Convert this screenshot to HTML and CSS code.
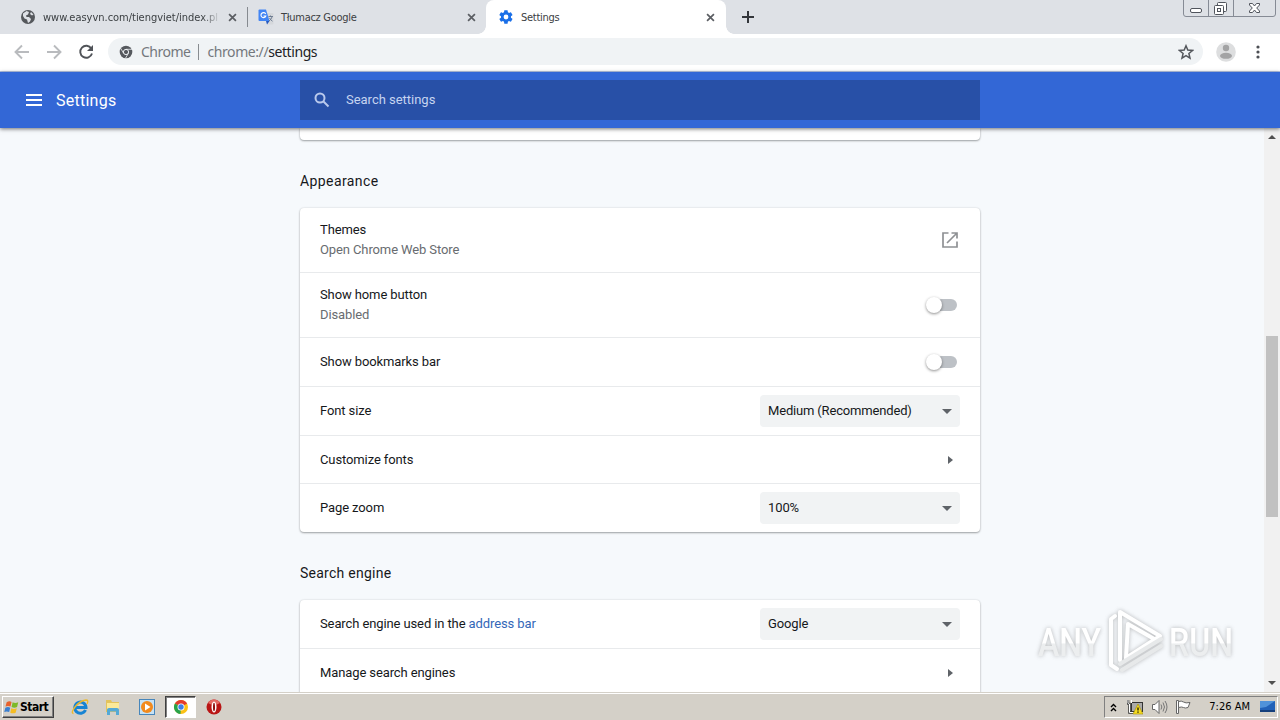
FILE: index.html
```html
<!DOCTYPE html>
<html lang="en">
<head>
<meta charset="utf-8">
<title>Settings</title>
<link rel="stylesheet" href="styles.css">
</head>
<body>
<div class="screen">
  <div class="tabs">
    <div class="tab tab-first">
      <svg class="fav" viewBox="0 0 16 16"><circle cx="8" cy="8" r="7" fill="#55585c"/><path d="M3 4.500 6.500 2 9 3l-1 2.500-2 1 .5 1.500H9l2 2-1 2.500L8 14l-1-3.500-2.500-1L3 7zM11 3l2.500 2.500-1.500 1L10 5z" fill="#dee1e6"/></svg>
      <span class="tab-title fade">www.easyvn.com/tiengviet/index.pl</span>
      <svg class="x" viewBox="0 0 10 10"><path d="M1.200 1.200 8.800 8.800M8.800 1.200 1.200 8.800"/></svg>
    </div>
    <div class="tab tab-second">
      <svg class="fav" viewBox="0 0 16 16"><path d="M6 4h8.500q1 0 1 1v9.500q0 1-1 1H9z" fill="#d5d8dc"/><path d="M1.500.5H8l3.500 11.500h-10q-1 0-1-1v-9.500q0-1 1-1z" fill="#4285f4"/><path d="M8 12h3.500L9 15.500z" fill="#2358c0"/><path d="M7.700 5A2.500 2.500 0 1 0 7.800 7H5.500" fill="none" stroke="#fff" stroke-width="1.100"/><path d="M10.500 7.500H15M12.500 6.500v1M14 8q-.8 2.500-3 4M11.500 9q1 2 3 3.200" fill="none" stroke="#65758b" stroke-width=".9"/></svg>
      <span class="tab-title tight">Tłumacz Google</span>
      <svg class="x" viewBox="0 0 10 10"><path d="M1.200 1.200 8.800 8.800M8.800 1.200 1.200 8.800"/></svg>
    </div>
    <div class="tab tab-active">
      <svg class="fav" viewBox="0 0 24 24"><path fill="#1a6fe8" d="M19.400 13c0-.3.100-.6.100-1s0-.7-.1-1l2.100-1.700c.2-.1.200-.4.100-.6l-2-3.500c-.1-.2-.4-.3-.6-.2l-2.500 1a7 7 0 0 0-1.700-1l-.4-2.600c0-.2-.2-.4-.5-.4h-4c-.3 0-.5.200-.5.400L9 5a7 7 0 0 0-1.700 1l-2.500-1c-.2-.1-.5 0-.6.200l-2 3.500c-.1.200-.1.500.1.600L4.500 11a8 8 0 0 0 0 2l-2.200 1.700c-.2.100-.2.400-.1.600l2 3.500c.1.200.4.300.6.200l2.500-1a7 7 0 0 0 1.700 1l.4 2.600c0 .2.200.4.500.4h4c.3 0 .5-.2.500-.4l.4-2.600a7 7 0 0 0 1.700-1l2.500 1c.2.100.5 0 .6-.2l2-3.500c.1-.2.100-.5-.1-.6zM12 15.600a3.600 3.600 0 1 1 0-7.200 3.600 3.600 0 0 1 0 7.200z"/></svg>
      <span class="tab-title tight">Settings</span>
      <svg class="x" viewBox="0 0 10 10"><path d="M1.200 1.200 8.800 8.800M8.800 1.200 1.200 8.800"/></svg>
    </div>
    <svg class="plus" viewBox="0 0 12 12"><path d="M6 0v12M0 6h12" stroke="#33363b" stroke-width="2"/></svg>
    <svg class="winbtns" viewBox="0 0 94 18"><path d="M.5 0v14q0 2.500 2.500 2.500h87q2.500 0 2.500-2.500V0M25.500 0v16M50.500 0v16" fill="none" stroke="#868b95"/><g fill="#fff" stroke="#50545c"><rect x="7.500" y="8.500" width="11" height="4" rx="1.500"/><rect x="34.500" y="2.500" width="9" height="9" rx="1"/><rect x="31.500" y="5.500" width="9" height="9" rx="1"/><rect x="34.500" y="8.500" width="3" height="3"/><path d="M66.500 3.500h3l2 2.500 2-2.500h3v1.500L73.700 8l2.800 3v1.500h-3l-2-2.500-2 2.500h-3V11l2.800-3-2.800-3z"/></g></svg>
  </div>
  <div class="toolbar">
    <svg class="nav" viewBox="0 0 16 16"><path d="M15 8H2M8 1.500 1.500 8 8 14.500" stroke="#b9bbbe"/></svg>
    <svg class="nav" viewBox="0 0 16 16"><path d="M1 8h13M8 1.500 14.500 8 8 14.500" stroke="#b9bbbe"/></svg>
    <svg class="nav" viewBox="0 0 16 16"><path d="M13.300 4.500A6 6 0 1 0 14 9.500" stroke="#505358"/><path d="M15 1v6H9z" fill="#505358" stroke="none"/></svg>
    <div class="omnibox">
      <svg class="chromeico" viewBox="0 0 14 14"><circle cx="7" cy="7" r="6.300" fill="#56595e"/><circle cx="7" cy="7" r="2.600" fill="none" stroke="#eff2f5"/><path d="M7 4.300h6M4.600 8.300 1.700 3.300M9.400 8.300 6.500 13.200" stroke="#eff2f5" stroke-width=".8"/></svg>
      <span class="o-name">Chrome</span><span class="o-sep"></span><span class="o-url">chrome://<b>settings</b></span>
      <svg class="star" viewBox="0 0 16 16"><path d="m8 1.800 1.800 4.300 4.700.4-3.600 3 1.100 4.600L8 11.700l-4 2.400 1.100-4.600-3.600-3 4.700-.4z" fill="none" stroke="#54575c" stroke-width="1.500"/></svg>
    </div>
    <svg class="avatar" viewBox="0 0 20 20"><circle cx="10" cy="10" r="9.800" fill="#dddedf"/><circle cx="10" cy="6" r="3.200" fill="#a3a3a4"/><ellipse cx="10" cy="13.800" rx="6" ry="3" fill="#a3a3a4"/></svg>
    <svg class="dots" viewBox="0 0 4 14"><circle cx="2" cy="2" r="1.600"/><circle cx="2" cy="7" r="1.600"/><circle cx="2" cy="12" r="1.600"/></svg>
  </div>
  <header class="header">
    <svg class="burger" viewBox="0 0 16 12"><path d="M0 1h16M0 6h16M0 11h16" stroke="#fff" stroke-width="2"/></svg>
    <span class="h-title">Settings</span>
    <div class="search">
      <svg viewBox="0 0 16 16"><circle cx="6" cy="6" r="4.500"/><path d="m9.500 9.500 5 5"/></svg>
      <span>Search settings</span>
    </div>
  </header>
  <div class="view">
    <main class="content">
      <div class="card stub"></div>
      <h2 class="h-app">Appearance</h2>
      <div class="card">
        <div class="row tall"><div><p>Themes</p><p class="sub">Open Chrome Web Store</p></div>
          <svg class="ext" viewBox="0 0 16 16"><path d="M6.500 1H1v14h14V9.500M9.500 1H15v5.500M15 1 5 11"/></svg></div>
        <div class="row tall"><div><p>Show home button</p><p class="sub">Disabled</p></div><span class="toggle"><i></i></span></div>
        <div class="row"><p>Show bookmarks bar</p><span class="toggle"><i></i></span></div>
        <div class="row"><p>Font size</p><div class="select"><span class="w-med">Medium (Recommended)</span><i></i></div></div>
        <div class="row short"><p>Customize fonts</p><i class="chev"></i></div>
        <div class="row"><p>Page zoom</p><div class="select"><span>100%</span><i></i></div></div>
      </div>
      <h2 class="h-search">Search engine</h2>
      <div class="card">
        <div class="row"><p>Search engine used in the <a>address bar</a></p><div class="select"><span>Google</span><i></i></div></div>
        <div class="row"><p>Manage search engines</p><i class="chev"></i></div>
      </div>
    </main>
    <div class="scrollbar"><i class="up"></i><i class="thumb"></i><i class="down"></i></div>
    <svg class="watermark" viewBox="0 0 210 80">
      <defs><linearGradient id="wm" x1="0" y1="0" x2="0" y2="1"><stop offset=".5" stop-color="#fff"/><stop offset=".52" stop-color="#eceeef"/></linearGradient></defs>
      <g fill="url(#wm)"><text x="8" y="54" textLength="63" lengthAdjust="spacingAndGlyphs">ANY</text><text x="139" y="54" textLength="64" lengthAdjust="spacingAndGlyphs">RUN</text></g>
      <g fill="none" stroke-width="4" stroke-linejoin="round" stroke-linecap="round"><path d="M85 14 81 17v46l6 4" stroke="#fff"/><path d="M90 58V10l40 24-34 22 2-34 28 16" stroke="#fff"/><path d="m90 62 41-25M92 68l39-24" stroke="#e7e9ea"/></g>
    </svg>
  </div>
  <footer class="taskbar">
    <div class="start"><svg viewBox="0 0 18 16"><path d="M3 2q3-2 5.500-.3L7.300 7Q4.500 5.500 1.700 7z" fill="#e8622c"/><path d="M9.700 2.200q3 1.500 6.300 0L14.700 7.500q-3 1.500-6.200 0z" fill="#7db928"/><path d="M1.500 8.200q3-1.500 5.500 0l-1.200 5q-2.800-1.600-5.500 0z" fill="#3a7fd0"/><path d="M8.200 8.800q3 1.500 6.200 0l-1.300 5q-3 1.500-6 0z" fill="#f5bd24"/></svg><span>Start</span></div>
    <svg class="app app-ie" viewBox="0 0 18 18"><path d="M14.500 12A5.600 5.600 0 1 1 15 9.500H5" fill="none" stroke="#1784d3" stroke-width="3"/><path d="M2.500 15.500Q-.5 15 4 9T15 2q3 0 1 4" fill="none" stroke="#edb92b" stroke-width="1.300"/></svg>
    <svg class="app app-folder" viewBox="0 0 18 18"><path d="M2 2h5l1 2h7v10H2z" fill="#e3c35c"/><path d="M3 5h12v6H3z" fill="#fbe999"/><path d="M3 17v-5q0-2 2-2h8q2 0 2 2v5h-3v-3.500H6V17z" fill="#54a9d6"/></svg>
    <svg class="app app-media" viewBox="0 0 18 18"><rect x="1.500" y="1.500" width="15" height="15" fill="#c6e2f5" stroke="#4786bb"/><circle cx="9" cy="9" r="6" fill="#f28a1d"/><path d="M7 5.500v7L12.500 9z" fill="#fff"/></svg>
    <div class="app-active"><svg class="app" viewBox="0 0 18 18"><circle cx="9" cy="9" r="7" fill="#fbc116"/><path d="M9 9 2.900 5.500A7 7 0 0 1 15.100 5.500z" fill="#e33b2e"/><path d="M9 9 2.900 5.500A7 7 0 0 0 8.500 16z" fill="#29a34a"/><circle cx="9" cy="9" r="3.500" fill="#fff"/><circle cx="9" cy="9" r="2.700" fill="#3e7fe8"/></svg></div>
    <svg class="app app-opera" viewBox="0 0 18 18"><circle cx="9" cy="9" r="7.500" fill="#b91515"/><path d="M3 5a7 7 0 0 1 12 0q-6 4-12 0z" fill="#e46a64"/><ellipse cx="9" cy="9" rx="2.500" ry="5.500" fill="#fff"/><ellipse cx="9" cy="9" rx="1" ry="4.300" fill="#8d0c0c"/></svg>
    <div class="tray">
      <svg class="tray-up" viewBox="0 0 7 9"><path d="m1 4 2.500-2.500L6 4M1 8l2.500-2.500L6 8" fill="none" stroke="#000" stroke-width="1.400"/></svg>
      <svg class="tray-net" viewBox="0 0 16 16"><rect x="4.500" y="3.500" width="11" height="9" fill="#aaa" stroke="#333"/><path d="M1 1v3q0 1 1.500 1v8.500H6" fill="none" stroke="#333" stroke-width="2.500"/><path d="M1 1v3q0 1 1.500 1v8.500H6M4.500 1v3" fill="none" stroke="#fff"/><path d="m11 5 5 10H6z" fill="#f6dc20" stroke="#a58b00" stroke-width=".6"/><path d="M11 8.500v3M11 12.500v1.300" stroke="#000" stroke-width="1.200"/></svg>
      <svg class="tray-vol" viewBox="0 0 17 16"><path d="M1.500 5.500H4l4-4v13l-4-4H1.500z" fill="#fff" stroke="#666"/><path d="M10 5.500q1.700 2.500 0 5M12 3.500q3 4.500 0 9M14 2q4 6 0 12" fill="none" stroke="#777"/></svg>
      <svg class="tray-flag" viewBox="0 0 16 16"><path d="M1.500 1.500h2v13h-2z" fill="#fff" stroke="#666"/><path d="M3.500 2.500q3-1 5 .5t6.500.5l-2 5q-3 1-4.500 0t-5 0z" fill="#fff" stroke="#666"/></svg>
      <span class="clock">7:26 AM</span>
      <svg class="tray-desk" viewBox="0 0 16 14"><path d="M0 1h15v9H0z" fill="#2161b8"/><path d="M0 1h15L6 7 0 8z" fill="#4f92da"/><path d="M0 10h15v2H0z" fill="#153f7b"/></svg>
    </div>
  </footer>
</div>
</body>
</html>
```
FILE: styles.css
```css
* { box-sizing: border-box; }
body { margin: 0; overflow: hidden; }
p, h2 { margin: 0; font-weight: 400; }
svg { display: block; flex: none; }
.screen { width: 1280px; height: 720px; display: flex; flex-direction: column; background: #f6f9fc; font: 13px/20px Roboto, sans-serif; color: #16181b; overflow: hidden; }
.screen span { white-space: nowrap; }

.tabs { height: 34px; flex: none; display: flex; align-items: center; background: #dee1e6; font: 11px/16px "DejaVu Sans Condensed", "DejaVu Sans", sans-serif; color: #3c4043; }
.tab { height: 34px; display: flex; align-items: center; }
.tab-first { width: 248px; padding: 0 11px 0 20px; }
.tab-second { width: 238px; padding: 0 10px; }
.tab-second::before { content: ""; width: 1px; height: 20px; background: #868a90; margin: 0 10px 0 -11px; }
.tab-active { width: 240px; padding: 0 11px 0 12px; background: #fff; border-radius: 8px 8px 0 0; position: relative; }
.tab-active::before, .tab-active::after { content: ""; position: absolute; bottom: 0; width: 8px; height: 8px; }
.tab-active::before { left: -8px; background: radial-gradient(circle at 0 0, transparent 7.500px, #fff 8px); }
.tab-active::after { right: -8px; background: radial-gradient(circle at 100% 0, transparent 7.500px, #fff 8px); }
.fav { width: 16px; height: 16px; margin-right: 7px; }
.tab-title { margin-right: auto; padding-top: 1px; }
.tight { letter-spacing: -.28px; }
.fade { letter-spacing: -.02px; -webkit-mask-image: linear-gradient(90deg, #000 91%, rgba(0,0,0,.15)); mask-image: linear-gradient(90deg, #000 91%, rgba(0,0,0,.15)); }
.x { width: 9px; height: 9px; }
.x path { stroke: #5b5e63; stroke-width: 1.900; }
.plus { width: 12px; height: 12px; margin-left: 16px; }
.winbtns { width: 94px; height: 18px; margin: 0 3px 0 auto; align-self: flex-start; }

.toolbar { height: 38px; flex: none; display: flex; align-items: center; padding: 0 20px 2px 14px; background: #fff; border-bottom: 1px solid #b9c8e8; }
.nav { width: 16px; height: 16px; margin-right: 16px; fill: none; stroke-width: 1.900; }
.omnibox { width: 1095px; height: 27px; margin-left: -2px; border-radius: 14px; background: #f0f3f5; display: flex; align-items: center; padding: 0 9px 0 11px; font: 14px/20px "Noto Sans", sans-serif; letter-spacing: -.42px; color: #74787d; }
.chromeico { width: 14px; height: 14px; margin-right: 8px; }
.o-name { letter-spacing: -.5px; }
.o-sep { width: 1px; height: 16px; background: #888c90; margin: 0 8px; }
.o-url b { font-weight: 400; color: #202124; }
.star { width: 16px; height: 16px; margin-left: auto; }
.avatar { width: 20px; height: 20px; margin-left: 13px; }
.dots { width: 4px; height: 14px; margin-left: auto; fill: #4c4f54; }

.header { height: 56px; flex: none; display: flex; align-items: center; background: #3367d6; box-shadow: 0 1px 4px rgba(0,0,0,.55); position: relative; z-index: 2; padding-left: 26px; }
.burger { width: 16px; height: 12px; }
.h-title { width: 244px; margin-left: 14px; padding-top: 2px; font-size: 16px; color: #fff; letter-spacing: .25px; }
.search { width: 680px; height: 40px; background: #2850a7; display: flex; align-items: center; padding-left: 14px; color: #c6d4f0; letter-spacing: -.02px; }
.search svg { width: 16px; height: 16px; margin-right: 16px; fill: none; stroke: #b9c9ec; stroke-width: 2; }

.view { height: 564px; flex: none; overflow: hidden; position: relative; display: flex; justify-content: center; }
.content { width: 680px; }
.card { background: #fff; border-radius: 4px; box-shadow: 0 1px 2px rgba(60,64,67,.45), 0 0 2px rgba(60,64,67,.15); }
.stub { height: 12px; border-radius: 0 0 4px 4px; }
h2 { font-size: 14px; line-height: 20px; }
.h-app { padding: 31px 0 17px; letter-spacing: .4px; }
.h-search { padding: 31px 0 17px; letter-spacing: .25px; }
.row { height: 49px; display: flex; align-items: center; justify-content: space-between; padding: 0 20px; border-bottom: 1px solid #e8eaec; letter-spacing: -.11px; }
.row.tall { height: 65px; }
.row.short { height: 48px; padding-top: 1px; }
.row:last-child { border-bottom: 0; height: 48px; }
.sub { color: #686c70; }
.row a { color: #3367b8; }
.w-med { letter-spacing: -.17px; }
.ext { width: 16px; height: 16px; margin-right: 2px; fill: none; stroke: #8f9194; stroke-width: 1.700; }
.toggle { width: 32px; height: 12px; margin-right: 3px; border-radius: 6px; background: linear-gradient(90deg, transparent 8px, #bdc1c6 8px); display: flex; align-items: center; }
.toggle i { width: 16px; height: 16px; flex: none; margin-left: 1px; border-radius: 50%; background: #fff; box-shadow: 0 1px 3px rgba(0,0,0,.45); }
.select { width: 200px; height: 32px; border-radius: 4px; background: #f1f3f4; padding: 0 8px; display: flex; align-items: center; justify-content: space-between; }
.select i { border: 5px solid transparent; border-top-color: #5f6368; border-bottom: 0; }
.chev { border: 4px solid transparent; border-left: 5px solid #5f6368; border-right: 0; margin-right: 7px; }

.scrollbar { position: absolute; right: 0; top: 0; width: 16px; height: 564px; background: #f1f1f1; display: flex; flex-direction: column; align-items: center; }
.up, .down { border: 4px solid transparent; }
.up { border-bottom-color: #505050; border-top: 0; margin-top: 7px; }
.thumb { width: 12px; height: 181px; margin-top: 197px; background: #c1c1c1; }
.down { border-top-color: #505050; border-bottom: 0; margin-top: auto; margin-bottom: 7px; }
.watermark { position: absolute; left: 1030px; top: 474px; width: 210px; height: 80px; overflow: visible; filter: drop-shadow(0 0 2px rgba(80,80,80,.38)); font: 500 39px Roboto, sans-serif; }

.taskbar { height: 28px; flex: none; background: #d4d0c8; border-top: 1px solid #d4d0c8; box-shadow: inset 0 1px #fff; display: flex; align-items: center; padding: 1px 2px 0; font: 11px/14px "DejaVu Sans Condensed", sans-serif; color: #000; }
.start { width: 52px; height: 22px; border: 1px solid; border-color: #fff #404040 #404040 #fff; box-shadow: inset -1px -1px #808080; display: flex; align-items: center; padding-left: 1px; font-weight: 700; font-size: 12px; letter-spacing: -.5px; }
.start svg { width: 16px; height: 15px; }
.app { width: 18px; height: 18px; }
.app-ie { margin-left: 17px; }
.app-folder { margin-left: 15px; }
.app-media { margin-left: 16px; }
.app-active { width: 31px; height: 22px; margin-left: 9px; border: 1px solid; border-color: #404040 #fff #fff #404040; box-shadow: inset 1px 1px #808080; background: #fff; display: flex; align-items: center; justify-content: center; }
.app-opera { margin-left: 9px; }
.tray { width: 174px; height: 22px; margin-left: auto; border: 1px solid; border-color: #808080 #fff #fff #808080; display: flex; align-items: center; padding: 0 1px 0 5px; }
.tray-up { width: 7px; height: 9px; }
.tray-net { width: 16px; height: 16px; margin-left: 10px; }
.tray-vol { width: 17px; height: 16px; margin-left: 8px; }
.tray-flag { width: 16px; height: 16px; margin-left: 7px; }
.clock { margin-left: auto; margin-right: 10px; }
.tray-desk { width: 16px; height: 14px; }
```
